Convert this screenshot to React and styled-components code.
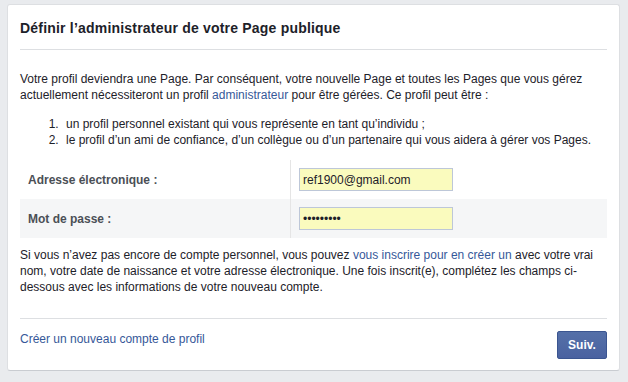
import React from "react";
import styled, { createGlobalStyle } from "styled-components";

const GlobalStyle = createGlobalStyle`
  html, body {
    margin: 0;
    padding: 0;
    background: #e9ebee;
  }
  body {
    font-family: "Liberation Sans", Arial, Helvetica, sans-serif;
    font-size: 12px;
    color: #1d2129;
  }
`;

const Page = styled.div`
  padding: 4px 8px 0 7px;
`;

const Card = styled.div`
  width: 587px;
  background: #fff;
  border: 1px solid #dddfe2;
  border-bottom-color: #c9ccd1;
  border-radius: 3px;
  padding: 0 12px;
`;

const Header = styled.div`
  padding: 15px 0 13px;
  border-bottom: 1px solid #dddfe2;
`;

const Title = styled.h2`
  margin: 0;
  font-size: 14px;
  line-height: 16px;
  font-weight: bold;
  letter-spacing: 0.2px;
  color: #1d2129;
`;

const Body = styled.div`
  padding-top: 21px;
  padding-bottom: 23px;
  border-bottom: 1px solid #dddfe2;
`;

const Text = styled.p`
  margin: 0;
  line-height: 16px;
`;

const Link = styled.a`
  color: #365899;
  text-decoration: none;
  cursor: pointer;
`;

const List = styled.ol`
  margin: 13px 0 12px;
  padding-left: 42px;
  line-height: 16px;
  li {
    padding-left: 4px;
  }
`;

const Form = styled.div`
  display: grid;
  grid-template-columns: 270px 1fr;
  margin-bottom: 9px;
`;

const Label = styled.label`
  display: flex;
  align-items: center;
  height: 39px;
  padding-left: 8px;
  font-weight: bold;
  color: #4b4f56;
  background: ${(p) => (p.$alt ? "#f5f6f7" : "transparent")};
`;

const Field = styled.div`
  display: flex;
  align-items: center;
  height: 39px;
  padding-left: 8px;
  border-left: 1px solid #e5e5e5;
  background: ${(p) => (p.$alt ? "#f5f6f7" : "transparent")};
`;

const Input = styled.input`
  width: 154px;
  height: 23px;
  box-sizing: border-box;
  padding: 0 3px;
  border: 1px solid #bdc7d8;
  background: #fafbbe;
  font-family: "Liberation Sans", Arial, sans-serif;
  font-size: 12px;
  color: #1d2129;
  outline: none;
`;

const Footer = styled.div`
  display: flex;
  justify-content: space-between;
  align-items: flex-start;
  padding: 12px 0 11px;
`;

const FooterLink = styled(Link)`
  line-height: 16px;
`;

const Button = styled.button`
  width: 50px;
  height: 28px;
  border: 1px solid #3b5590;
  border-radius: 2px;
  background: linear-gradient(#5570a8, #4a62a0);
  color: #fff;
  font-family: "Liberation Sans", Arial, sans-serif;
  font-size: 12px;
  font-weight: bold;
  padding: 0;
  cursor: pointer;
`;

export default function App() {
  return (
    <>
      <GlobalStyle />
      <Page>
        <Card>
          <Header>
            <Title>Définir l’administrateur de votre Page publique</Title>
          </Header>
          <Body>
            <Text>
              Votre profil deviendra une Page. Par conséquent, votre nouvelle Page et toutes les Pages que vous gérez
              actuellement nécessiteront un profil <Link>administrateur</Link> pour être gérées. Ce profil peut être :
            </Text>
            <List>
              <li>un profil personnel existant qui vous représente en tant qu’individu ;</li>
              <li>le profil d’un ami de confiance, d’un collègue ou d’un partenaire qui vous aidera à gérer vos Pages.</li>
            </List>
            <Form>
              <Label>Adresse électronique :</Label>
              <Field>
                <Input type="text" defaultValue="ref1900@gmail.com" />
              </Field>
              <Label $alt>Mot de passe :</Label>
              <Field $alt>
                <Input type="password" defaultValue="123456789" />
              </Field>
            </Form>
            <Text>
              Si vous n’avez pas encore de compte personnel, vous pouvez <Link>vous inscrire pour en créer un</Link> avec
              votre vrai nom, votre date de naissance et votre adresse électronique. Une fois inscrit(e), complétez les
              champs ci-dessous avec les informations de votre nouveau compte.
            </Text>
          </Body>
          <Footer>
            <FooterLink>Créer un nouveau compte de profil</FooterLink>
            <Button>Suiv.</Button>
          </Footer>
        </Card>
      </Page>
    </>
  );
}
